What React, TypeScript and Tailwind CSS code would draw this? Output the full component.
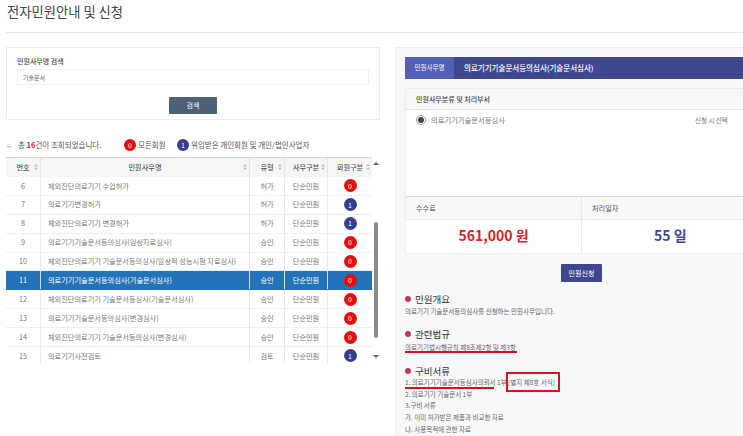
const rows = [
  { n: 6, name: "체외진단의료기기 수입허가", t: "허가", m: 0 },
  { n: 7, name: "의료기기변경허가", t: "허가", m: 1 },
  { n: 8, name: "체외진단의료기기 변경허가", t: "허가", m: 1 },
  { n: 9, name: "의료기기기술문서등의심사(임상자료심사)", t: "승인", m: 0 },
  { n: 10, name: "체외진단의료기기 기술문서등의심사(임상적 성능시험 자료심사)", t: "승인", m: 0 },
  { n: 11, name: "의료기기기술문서등의심사(기술문서심사)", t: "승인", m: 0, active: true },
  { n: 12, name: "체외진단의료기기 기술문서등심사(기술문서심사)", t: "승인", m: 0 },
  { n: 13, name: "의료기기기술문서등의심사(변경심사)", t: "승인", m: 0 },
  { n: 14, name: "체외진단의료기기 기술문서등의심사(변경심사)", t: "승인", m: 0 },
  { n: 15, name: "의료기기사전검토", t: "검토", m: 1 },
];

function Badge({ v, size = "w-[13px] h-[13px]" }: { v: number; size?: string }) {
  return (
    <span
      className={`${size} rounded-full flex items-center justify-center text-white text-[7px] shrink-0 ${
        v === 0 ? "bg-[#e60d0d]" : "bg-[#373f8c]"
      }`}
    >
      {v}
    </span>
  );
}

function Sort() {
  return (
    <svg width="4" height="6" viewBox="0 0 4 6" className="absolute right-[2px] top-[6px]">
      <path d="M2 0 L4 2.3 H0 Z M2 6 L4 3.7 H0 Z" fill="#bbb" />
    </svg>
  );
}

function Heading({ children }: { children: string }) {
  return (
    <div className="flex items-center gap-[4px] h-[12px] text-[9.5px] leading-[12px] text-[#333]">
      <span className="w-[6px] h-[6px] rounded-full bg-[#c0395c]" />
      {children}
    </div>
  );
}

export default function App() {
  return (
    <div
      className="w-[743px] h-[436px] overflow-hidden bg-white text-[7.2px] text-[#777]"
      style={{ fontFamily: '"Noto Sans CJK KR", "Noto Sans", sans-serif' }}
    >
      <div className="h-[33px] ml-[6px] border-b border-[#e8e8e8]">
        <h1 className="text-[13.3px] leading-[24px] pl-[1px] text-[#444] font-normal">전자민원안내 및 신청</h1>
      </div>

      <div className="flex pl-[6px] pt-[14px]">
        <div className="w-[374px] shrink-0">
          <div className="h-[73px] border border-[#ebebeb] px-[10px] pt-[8px]">
            <div className="text-[7px] leading-[10px] text-[#444] font-medium">민원사무명 검색</div>
            <div className="mt-[3px] h-[16px] border border-[#f0f0f0] flex items-center px-[5px] text-[6px] text-[#666]">
              기술문서
            </div>
            <div className="flex justify-center mt-[12px]">
              <div className="w-[48px] h-[17px] rounded-[1px] bg-[#4d6076] text-white text-[7px] flex items-center justify-center">
                검색
              </div>
            </div>
          </div>

          <div className="h-[24px] mt-[13px] flex items-center text-[7.5px] text-[#555]">
            <span className="text-[6px] text-[#999] w-[12px]">≡</span>
            <span className="w-[106px]">
              총 <b className="text-[#d9232b]">16</b>건이 조회되었습니다.
            </span>
            <Badge v={0} size="w-[12px] h-[12px]" />
            <span className="ml-[2px] w-[39px]">모든회원</span>
            <Badge v={1} size="w-[12px] h-[12px]" />
            <span className="ml-[2px]">위임받은 개인회원 및 개인/법인사업자</span>
          </div>

          <div className="relative h-[206px] overflow-hidden flex">
            <div className="w-[366px] shrink-0">
              <div className="grid grid-cols-[35px_209px_35px_43px_44px] h-[20px] pb-[1px] bg-[#f5f5f5] border-t border-[#d5d5d5] text-[#555] font-medium">
                {["번호", "민원사무명", "유형", "사무구분", "회원구분"].map((h) => (
                  <div key={h} className="relative flex items-center justify-center border-r border-[#e5e5e5] last:border-r-0">
                    {h}
                    <Sort />
                  </div>
                ))}
              </div>
              {rows.map((r) => (
                <div
                  key={r.n}
                  className={`grid grid-cols-[35px_209px_35px_43px_44px] h-[18.9px] items-stretch border-b ${
                    r.active ? "bg-[#2473b9] text-white border-[#2473b9]" : "border-[#efefef]"
                  }`}
                >
                  <div className={`flex items-center justify-center border-r ${r.active ? "border-[#cfe0f0]" : "border-[#e8e8e8]"}`}>{r.n}</div>
                  <div className={`flex items-center pl-[7px] border-r whitespace-nowrap ${r.active ? "border-[#cfe0f0]" : "border-[#e8e8e8]"}`}>{r.name}</div>
                  <div className={`flex items-center justify-center border-r ${r.active ? "border-[#cfe0f0]" : "border-[#e8e8e8]"}`}>{r.t}</div>
                  <div className={`flex items-center justify-center border-r ${r.active ? "border-[#cfe0f0]" : "border-[#e8e8e8]"}`}>단순민원</div>
                  <div className="flex items-center justify-center">
                    <Badge v={r.m} />
                  </div>
                </div>
              ))}
            </div>
            <div className="relative w-[8px] shrink-0 bg-white">
              <svg width="6" height="4" viewBox="0 0 6 4" className="absolute left-[1px] top-[5px]">
                <path d="M3 0 L6 3 H0 Z" fill="#666" />
              </svg>
              <div className="absolute left-[2px] top-[65px] w-[4px] h-[116px] rounded-full bg-[#8a8a8a]" />
              <svg width="6" height="4" viewBox="0 0 6 4" className="absolute left-[1px] top-[198px]">
                <path d="M3 3 L6 0 H0 Z" fill="#666" />
              </svg>
            </div>
          </div>
        </div>

        <div className="relative ml-[15px] w-[360px] shrink-0 h-[400px] bg-[#f6f8f9] border border-[#edf0f1] px-[9px] pt-[9px]">
          <div className="h-[22px] flex items-center bg-[#3f478f] rounded-[1px] text-white">
            <div className="w-[49px] h-full bg-[#5160b5] flex items-center justify-center text-[6.5px]">민원사무명</div>
            <div className="ml-[10px] text-[7.5px] font-medium">의료기기기술문서등의심사(기술문서심사)</div>
          </div>

          <div className="mt-[9px] bg-white border border-[#eceeef]">
            <div className="h-[21px] bg-[#f8f8f8] border-b border-[#e8e8e8] flex items-center pl-[10px] text-[7px] text-[#444] font-medium">
              민원사무분류 및 처리부서
            </div>
            <div className="h-[87px] border-b border-[#dcdcdc] pt-[5px] pl-[10px] flex items-start">
              <span className="w-[10px] h-[10px] rounded-full border border-[#999] flex items-center justify-center">
                <span className="w-[6px] h-[6px] rounded-full bg-[#444]" />
              </span>
              <span className="ml-[5px] leading-[10px] w-[264px] text-[7.3px]">의료기기기술문서등심사</span>
              <span className="leading-[10px] text-[6.5px]">신청 시 선택</span>
            </div>
            <div className="grid grid-cols-[176px_1fr]">
              <div className="h-[23px] bg-[#f8f8f8] border-b border-r border-[#e8e8e8] flex items-center pl-[10px] text-[#555]">수수료</div>
              <div className="h-[23px] bg-[#f8f8f8] border-b border-[#e8e8e8] flex items-center pl-[10px] text-[#555]">처리일자</div>
              <div className="h-[33px] pb-[2px] border-r border-[#e8e8e8] flex items-center justify-center text-[14px] font-bold text-[#d9232b]">561,000 원</div>
              <div className="h-[33px] pb-[2px] flex items-center justify-start pl-[72px] text-[14px] font-bold text-[#3f478f]">55 일</div>
            </div>
          </div>

          <div className="flex w-[340px] pl-[156px] mt-[10px]">
            <div className="w-[41px] h-[18px] rounded-[1px] bg-[#3f478f] text-white text-[7px] flex items-center justify-center">민원신청</div>
          </div>

          <div className="mt-[11px] text-[6.5px]">
            <Heading>민원개요</Heading>
            <div className="leading-[12px] text-[#666]">의료기기 기술문서등의심사를 신청하는 민원사무입니다.</div>
          </div>
          <div className="mt-[11px] text-[6.5px]">
            <Heading>관련법규</Heading>
            <div className="mt-[1px] leading-[12px] text-[#666]">의료기기법시행규칙 제8조제2항 및 제3항</div>
          </div>
          <div className="mt-[12px] text-[6.5px]">
            <Heading>구비서류</Heading>
            <div className="leading-[11.7px] text-[#666]">
              <div>1. 의료기기기술문서등심사의뢰서 1부 [별지 제8호 서식]</div>
              <div>2. 의료기기 기술문서 1부</div>
              <div>3.구비 서류</div>
              <div>가. 이미 허가받은 제품과 비교한 자료</div>
              <div>나. 사용목적에 관한 자료</div>
            </div>
          </div>

          <div className="absolute left-[9px] top-[303px] w-[112px] h-[1.5px] bg-[#d8101c]" />
          <div className="absolute left-[9px] top-[339px] w-[89px] h-[1.5px] bg-[#d8101c]" />
          <div className="absolute left-[110px] top-[324px] w-[54px] h-[20px] border-2 border-[#e0101c]" />
        </div>
      </div>
    </div>
  );
}
